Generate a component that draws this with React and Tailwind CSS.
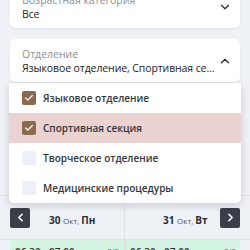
import { Check, ChevronDown, ChevronUp, ChevronLeft, ChevronRight } from 'lucide-react';

const options = [
  { label: "Языковое отделение", checked: true, active: false },
  { label: "Спортивная секция", checked: true, active: true },
  { label: "Творческое отделение", checked: false, active: false },
  { label: "Медицинские процедуры", checked: false, active: false },
];

function FilterCard({ label, value, open }) {
  return (
    <div className="h-[43px] bg-white rounded-[5px] shadow-[0_1px_2px_rgba(0,0,0,0.08)] flex items-center pl-[12px] pr-[14px]">
      <div className="w-[196px] shrink-0 pt-[1px]">
        <div className="text-[10.5px] leading-[14px] text-[#8a8f98]">{label}</div>
        <div className="text-[10.5px] leading-[15px] text-[#1f2328] font-medium truncate tracking-[-0.1px]">{value}</div>
      </div>
      <div className="ml-auto">
        {open ? (
          <ChevronUp size={14} strokeWidth={2.2} className="text-[#2b2f36]" />
        ) : (
          <ChevronDown size={14} strokeWidth={2.2} className="text-[#2b2f36]" />
        )}
      </div>
    </div>
  );
}

export default function App() {
  return (
    <div className="relative w-[250px] h-[250px] overflow-hidden bg-[#eef1f6]" style={{ fontFamily: '"Open Sans", "Noto Sans", sans-serif' }}>
      {/* Filters */}
      <div className="px-[10px] -mt-[15px] flex flex-col gap-[11px]">
        <FilterCard label="Возрастная категория" value="Все" />
        <FilterCard label="Отделение" value="Языковое отделение, Спортивная секция" open />
        <div className="h-[91px] bg-white rounded-[5px]" />
      </div>

      {/* Date navigation */}
      <div className="mt-[11px] border-t border-[#dde1e8] h-[45px] flex border-b">
        <div className="w-[125px] flex items-center pl-[10px] border-r border-[#dde1e8]">
          <button className="w-[20px] h-[20px] bg-[#3b3f4a] rounded-[2px] flex items-center justify-center">
            <ChevronLeft size={13} strokeWidth={3} className="text-white" />
          </button>
          <div className="ml-[19px] text-[#2b2f36] leading-none whitespace-nowrap">
            <span className="text-[10px] font-bold">30 </span>
            <span className="text-[8px] text-[#555]">Окт, </span>
            <span className="text-[10px] font-bold">Пн</span>
          </div>
        </div>
        <div className="flex-1 flex items-center pl-[38px] pr-[10px]">
          <div className="text-[#2b2f36] leading-none whitespace-nowrap">
            <span className="text-[10px] font-bold">31 </span>
            <span className="text-[8px] text-[#555]">Окт, </span>
            <span className="text-[10px] font-bold">Вт</span>
          </div>
          <button className="ml-auto w-[20px] h-[20px] bg-[#3b3f4a] rounded-[2px] flex items-center justify-center">
            <ChevronRight size={13} strokeWidth={3} className="text-white" />
          </button>
        </div>
      </div>

      {/* Slots */}
      <div className="flex px-[10px]">
        <div className="w-[114px] h-[30px] bg-[#d5f5e3] flex justify-between px-[5px] pt-[5px]">
          <span className="text-[10px] font-semibold text-[#333]">06:30 - 07:00</span>
          <span className="text-[8px] text-[#555]">0/5</span>
        </div>
        <div className="w-[2px] bg-[#dde1e8]" />
        <div className="flex-1 h-[30px] bg-[#d5f5e3] flex justify-between px-[4px] pt-[5px]">
          <span className="text-[10px] font-semibold text-[#333]">06:30 - 07:00</span>
          <span className="text-[8px] text-[#555]">0/5</span>
        </div>
      </div>

      {/* Dropdown menu */}
      <div className="absolute left-[9px] top-[83px] w-[232px] bg-white rounded-b-[5px] shadow-[0_3px_8px_rgba(0,0,0,0.15)]">
        {options.map((opt) => (
          <div key={opt.label} className={`h-[30px] flex items-center pl-[13px] ${opt.active ? "bg-[#ead3d1]" : ""}`}>
            <div className={`w-[14px] h-[14px] rounded-[2px] flex items-center justify-center ${opt.checked ? "bg-[#8c6a4f]" : "bg-[#edf0f6]"}`}>
              {opt.checked && <Check size={10} strokeWidth={3} className="text-white" />}
            </div>
            <span className="ml-[7px] text-[10px] font-semibold text-[#33363b]">{opt.label}</span>
          </div>
        ))}
      </div>
    </div>
  );
}
